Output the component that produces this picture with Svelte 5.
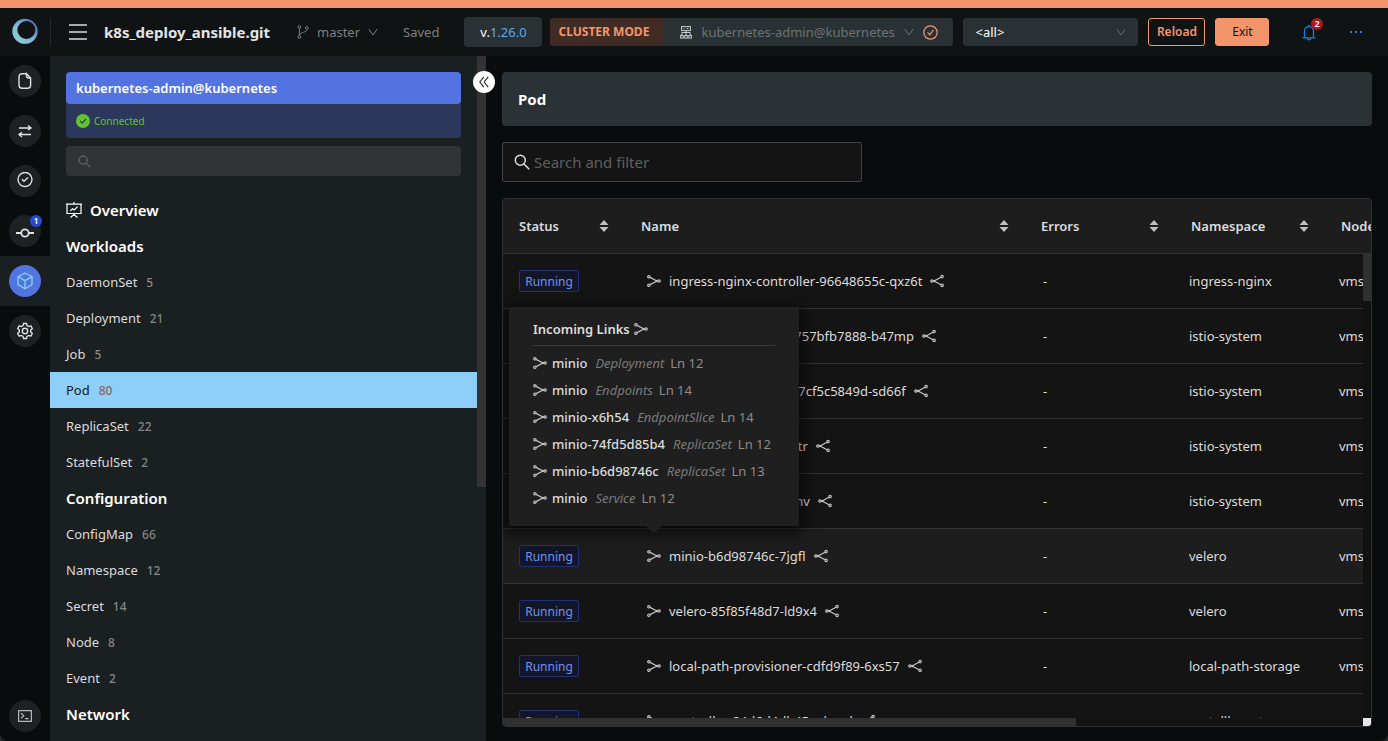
<script lang="ts">
	type Item = { name: string; count: number };
	type Section = { title: string; items: Item[] };
	type Pod = { name: string; namespace: string };

	const sections: Section[] = [
		{
			title: 'Workloads',
			items: [
				{ name: 'DaemonSet', count: 5 },
				{ name: 'Deployment', count: 21 },
				{ name: 'Job', count: 5 },
				{ name: 'Pod', count: 80 },
				{ name: 'ReplicaSet', count: 22 },
				{ name: 'StatefulSet', count: 2 }
			]
		},
		{
			title: 'Configuration',
			items: [
				{ name: 'ConfigMap', count: 66 },
				{ name: 'Namespace', count: 12 },
				{ name: 'Secret', count: 14 },
				{ name: 'Node', count: 8 },
				{ name: 'Event', count: 2 }
			]
		},
		{ title: 'Network', items: [] }
	];

	const pods: Pod[] = [
		{ name: 'ingress-nginx-controller-96648655c-qxz6t', namespace: 'ingress-nginx' },
		{ name: 'istio-egressgateway-757bfb7888-b47mp', namespace: 'istio-system' },
		{ name: 'istio-ingressgateway-7cf5c5849d-sd66f', namespace: 'istio-system' },
		{ name: 'istiod-689fbf9795-vpltr', namespace: 'istio-system' },
		{ name: 'kiali-5ff49b9f69-4mdnv', namespace: 'istio-system' },
		{ name: 'minio-b6d98746c-7jgfl', namespace: 'velero' },
		{ name: 'velero-85f85f48d7-ld9x4', namespace: 'velero' },
		{ name: 'local-path-provisioner-cdfd9f89-6xs57', namespace: 'local-path-storage' },
		{ name: 'controller-84d6d4db45-wlpwd', namespace: 'metallb-system' }
	];

	const links = [
		{ name: 'minio', kind: 'Deployment', line: 12 },
		{ name: 'minio', kind: 'Endpoints', line: 14 },
		{ name: 'minio-x6h54', kind: 'EndpointSlice', line: 14 },
		{ name: 'minio-74fd5d85b4', kind: 'ReplicaSet', line: 12 },
		{ name: 'minio-b6d98746c', kind: 'ReplicaSet', line: 13 },
		{ name: 'minio', kind: 'Service', line: 12 }
	];

	const columns = ['Status', 'Name', 'Errors', 'Namespace', 'Node'];
	const railIcons = ['file', 'swap', 'check', 'commit', 'cube', 'gear'];

	let selected = $state('Pod');
	let activeRail = $state('cube');
	let hovered = $state(5);
	let filter = $state('');
</script>

{#snippet incoming()}
	<svg class="link-icon" width="14" height="14" viewBox="0 0 14 14" fill="none" stroke="currentColor" stroke-width="1.2">
		<circle cx="1.9" cy="2.8" r="1.2" /><circle cx="1.9" cy="11.2" r="1.2" /><circle cx="12.100" cy="7" r="1.2" />
		<path d="M3 3.400 9 6.500l2 .5M3 10.600 9 7.500l2-.5" stroke-width="1.300" />
	</svg>
{/snippet}

{#snippet outgoing()}
	<svg class="link-icon" width="14" height="14" viewBox="0 0 14 14" fill="none" stroke="currentColor" stroke-width="1.2">
		<circle cx="12.1" cy="2.6" r="1.2" /><circle cx="12.1" cy="11.4" r="1.2" /><circle cx="1.900" cy="7" r="1.2" />
		<path d="M11 3.200 5 6.500 3 7M11 10.800 5 7.500 3 7" stroke-width="1.300" />
	</svg>
{/snippet}

{#snippet chevron()}
	<svg width="10" height="10" viewBox="0 0 10 10" fill="none" stroke="currentColor"><path d="m.8 2 4.200 6 4.200-6" /></svg>
{/snippet}

{#snippet magnifier(size: number)}
	<svg width={size} height={size} viewBox="0 0 16 16" fill="none" stroke="currentColor" stroke-width="1.5">
		<circle cx="6.3" cy="6.3" r="5" /><path d="m10 10 5.2 5.2" />
	</svg>
{/snippet}

<div class="app">
	<header>
		<div class="logo">
			<svg width="26" height="26" viewBox="0 0 26 26">
				<defs>
					<linearGradient id="ring" x1="0" y1="1" x2="1" y2="0">
						<stop offset="0" stop-color="#8fd6cf" /><stop offset=".5" stop-color="#80b2d8" /><stop offset="1" stop-color="#4260b5" />
					</linearGradient>
				</defs>
				<path fill="url(#ring)" fill-rule="evenodd" d="M13 .8a12.700 12.500 0 1 0 0 25A12.700 12.500 0 0 0 13 .8Zm1.400 2.200a9 9 0 1 1 0 18 9 9 0 0 1 0-18Z" />
			</svg>
		</div>
		<button class="plain menu" aria-label="Menu">
			<svg width="18" height="17" viewBox="0 0 18 17" stroke="currentColor" stroke-width="1.6"><path d="M0 1h18M0 8h18M0 15h18" /></svg>
		</button>
		<strong class="project">k8s_deploy_ansible.git</strong>
		<button class="plain branch">
			<svg width="12" height="14" viewBox="0 0 12 14" fill="none" stroke="currentColor">
				<circle cx="2.4" cy="2" r="1.4" /><circle cx="2.4" cy="12" r="1.4" /><circle cx="9.8" cy="3" r="1.4" />
				<path d="M2.4 3.4v7.2M9.8 4.4c0 3.2-6 2.6-7.2 5.4" />
			</svg>
			<span>master</span>
			{@render chevron()}
		</button>
		<span class="saved">Saved</span>
		<button class="version">v.<span>1.26.0</span></button>
		<div class="cluster">
			<span class="mode">CLUSTER MODE</span>
			<button class="plain context">
				<svg width="12" height="13" viewBox="0 0 12 13" fill="none" stroke="#c8cbcc">
					<rect x="1.500" y=".6" width="9" height="4" /><path d="M3.500 2.600h1m2 0h2M1.800 9V6.500h8.400V9M6 4.600V9" />
					<rect x=".6" y="9.5" width="2.6" height="2.6" /><rect x="4.7" y="9.5" width="2.6" height="2.6" /><rect x="8.8" y="9.5" width="2.6" height="2.6" />
				</svg>
				<span>kubernetes-admin@kubernetes</span>
				{@render chevron()}
			</button>
			<svg class="ok" width="15" height="15" viewBox="0 0 15 15" fill="none" stroke="#f2976c" stroke-width="1.2">
				<circle cx="7.5" cy="7.5" r="6.7" /><path d="m4.6 7.4 2.2 2.4 3.6-4.6" />
			</svg>
		</div>
		<div class="select">
			<select aria-label="Namespace"><option>&lt;all&gt;</option></select>
			{@render chevron()}
		</div>
		<button class="reload">Reload</button>
		<button class="exit">Exit</button>
		<div class="tools">
			<button class="plain bell" aria-label="Notifications">
				<svg width="14" height="17" viewBox="0 0 14 17" fill="none" stroke="currentColor" stroke-width="1.3">
					<path d="M.5 13.800h13M2.500 13.800V7a4.500 4.500 0 0 1 9 0v6.800M7 2.500V.8M5.300 14.500c.3 1.800 3.100 1.800 3.400 0" />
				</svg>
				<span class="badge">2</span>
			</button>
			<button class="plain dots" aria-label="More">
				<svg width="14" height="4" viewBox="0 0 14 4" fill="currentColor"><path d="M1 1h2v2H1zM6 1h2v2H6zM11 1h2v2h-2z" /></svg>
			</button>
		</div>
	</header>

	<div class="body">
		<nav class="rail" aria-label="Views">
			{#each railIcons as icon}
				<button class="rail-item" class:active={activeRail === icon} aria-label={icon} onclick={() => (activeRail = icon)}>
					<span class="circle">
						<svg width="18" height="18" viewBox="0 0 18 18" fill="none" stroke="currentColor" stroke-width="1.4">
							{#if icon === 'file'}
								<path d="M10.500 1.700H6a3 3 0 0 0-3 3v8.600a3 3 0 0 0 3 3h5.600a3 3 0 0 0 3-3V6l-4.100-4.300v2.600q0 1.700 1.700 1.700h2.400" />
							{:else if icon === 'swap'}
								<path d="M3 6h12M12 3.500 15 6l-3 2M15 12.500H3M6 10.300l-3 2.200L6 15" />
							{:else if icon === 'check'}
								<circle cx="9" cy="7.5" r="7" /><path d="m6 7.300 2 2 4-3.800" />
							{:else if icon === 'commit'}
								<circle cx="9" cy="11" r="3.7" stroke-width="1.8" /><path d="M0 11h5M13 11h5" stroke-width="1.8" />
							{:else if icon === 'cube'}
								<path d="M9 1 16 4.700v8L9 16.800l-7-4.100v-8zM2 4.700l7 3.900 7-3.900M9 8.600v8.200" />
							{:else}
								<path d="M7.500 1.500h3l.5 2.100 1.700 1 2.100-.7 1.500 2.600-1.600 1.500v2l1.600 1.500-1.500 2.600-2.100-.7-1.700 1-.5 2.100h-3L7 14.400l-1.700-1-2.100.7-1.500-2.600L3.300 10V8L1.700 6.500l1.500-2.600 2.100.7 1.700-1z" /><circle cx="9" cy="9" r="2.7" />
							{/if}
						</svg>
						{#if icon === 'commit'}<span class="badge">1</span>{/if}
					</span>
				</button>
			{/each}
			<button class="rail-item terminal" aria-label="Terminal">
				<span class="circle">
					<svg width="14" height="12" viewBox="0 0 14 12" fill="none" stroke="currentColor" stroke-width="1.2">
						<path d="M.6.6h12.800v10.800H.6zM3 3.300l2.800 2.500L3 8.300M7 8.600h3.600" />
					</svg>
				</span>
			</button>
		</nav>

		<aside>
			<div class="side-content">
				<div class="connection">
					<strong>kubernetes-admin@kubernetes</strong>
					<p>
						<svg width="14" height="14" viewBox="0 0 14 14"><circle cx="7" cy="7" r="7" fill="#62c22f" /><path d="m4.200 6.800 2 2.300L10 4.800" fill="none" stroke="#2b3a5c" stroke-width="1.2" /></svg>
						Connected
					</p>
				</div>
				<label class="side-search">
					{@render magnifier(13)}
					<input type="text" aria-label="Search resources" />
				</label>
				<h2 class="overview">
					<svg width="16" height="16" viewBox="0 0 16 16" fill="none" stroke="currentColor" stroke-width="1.2">
						<path d="M0 2.100h16M1 2.100v9.400h14V2.100M8 0v2M8 11.500V14M4.500 15.500 8 12.500l3.500 3M4.300 8.700l2.400-2 1.600 1.200 3.400-3.300" />
					</svg>
					Overview
				</h2>
				{#each sections as section}
					<h2>{section.title}</h2>
					{#each section.items as item}
						<button class="kind" class:selected={selected === item.name} onclick={() => (selected = item.name)}>
							{item.name}<span>{item.count}</span>
						</button>
					{/each}
				{/each}
			</div>
			<div class="side-scroll"></div>
			<button class="collapse" aria-label="Collapse">
				<svg width="12" height="12" viewBox="0 0 12 12" fill="none" stroke="#222" stroke-width="1.1"><path d="M5.800.8 1.800 6l4 5.200M10.200.8 6.200 6l4 5.200" /></svg>
			</button>
		</aside>

		<main>
			<h1>{selected}</h1>
			<label class="filter">
				{@render magnifier(16)}
				<input type="text" placeholder="Search and filter" bind:value={filter} />
			</label>
			<div class="table-box">
				<table>
					<thead>
						<tr>
							{#each columns as column}
								<th class={column.toLowerCase()}>
									<div>
										{column}
										{#if column !== 'Node'}
											<svg width="10" height="12" viewBox="0 0 10 12" fill="#bfbfbf"><path d="M5 0l4.500 5h-9zM5 12 .5 7h9z" /></svg>
										{/if}
									</div>
								</th>
							{/each}
						</tr>
					</thead>
					<tbody>
						{#each pods as pod, i}
							<tr class:hovered={hovered === i} onmouseenter={() => (hovered = i)}>
								<td><span class="tag">Running</span></td>
								<td class="name">
									<div>
										<span class="anchor">
											{@render incoming()}
											{#if hovered === i}
												<div class="popover">
													<h3>Incoming Links {@render incoming()}</h3>
													<ul>
														{#each links as link}
															<li>{@render incoming()}<b>{link.name}</b><i>{link.kind}</i><span>Ln {link.line}</span></li>
														{/each}
													</ul>
												</div>
											{/if}
										</span>
										<span class="pod-name">{pod.name}</span>
										{@render outgoing()}
									</div>
								</td>
								<td class="error-count">-</td>
								<td class="shift">{pod.namespace}</td>
								<td class="shift">vms-k8s</td>
							</tr>
						{/each}
					</tbody>
				</table>
				<div class="v-scroll"><div></div></div>
				<div class="h-scroll"><div></div><span></span></div>
			</div>
		</main>
	</div>
</div>

<style>
	:global(body) {
		background: #24282a;
	}

	.app {
		display: flex;
		flex-direction: column;
		height: 100vh;
		overflow: hidden;
		box-sizing: border-box;
		border-top: 8px solid #f2956a;
		border-radius: 0 0 8px 8px;
		background: #090c0d;
		color: #dcdcdc;
		font: 13px/20px 'Segoe UI', 'Noto Sans', sans-serif;
	}

	.app :global(*) {
		box-sizing: border-box;
	}

	svg {
		flex: none;
		display: block;
	}

	button, input, select {
		font: inherit;
		color: inherit;
	}

	button {
		cursor: pointer;
		padding: 0;
		border: none;
	}

	.plain {
		display: flex;
		align-items: center;
		background: none;
	}

	h1, h2, h3, p, ul {
		margin: 0;
		padding: 0;
	}

	/* header */
	header {
		display: flex;
		align-items: center;
		flex: none;
		height: 48px;
		background: #0f1314;
		white-space: nowrap;
	}

	.logo {
		width: 51px;
		height: 28px;
		padding-left: 12px;
		border-right: 1px solid #25292a;
	}

	.menu {
		margin-left: 18px;
	}

	.project {
		width: 168px;
		margin-left: 17px;
		font-size: 15px;
		font-weight: 700;
		color: #e4e4e4;
	}

	.branch {
		gap: 8px;
		margin-left: 25px;
		color: #7d7f80;
	}

	.saved {
		margin-left: 25px;
		color: #7d7f80;
	}

	.version {
		width: 78px;
		height: 30px;
		margin-left: 25px;
		border-radius: 4px;
		background: #2a3134;
		color: #fff;
	}

	.version span {
		color: #55aef0;
	}

	.cluster {
		display: flex;
		align-items: center;
		width: 403px;
		height: 28px;
		margin-left: 8px;
		border-radius: 4px;
		overflow: hidden;
		background: #2a3134;
	}

	.mode {
		width: 113px;
		padding-left: 8px;
		line-height: 28px;
		background: #402c25;
		color: #f5956a;
		font-size: 12px;
		font-weight: 700;
	}

	.context {
		gap: 9px;
		margin-left: 17px;
		color: #6c7173;
	}

	.ok {
		margin-left: 9px;
	}

	.select {
		position: relative;
		width: 175px;
		margin-left: 10px;
		color: #65696b;
	}

	.select select {
		appearance: none;
		width: 100%;
		height: 28px;
		padding: 0 12px;
		border: none;
		border-radius: 4px;
		background: #2a3134;
		color: #fff;
	}

	.select svg {
		position: absolute;
		right: 12px;
		top: 9px;
	}

	.reload, .exit {
		height: 28px;
		margin-left: 10px;
		border: 1px solid #f2956a;
		border-radius: 3px;
		font-size: 12px;
	}

	.reload {
		width: 57px;
		background: none;
		color: #f5956a;
		font-weight: 600;
	}

	.exit {
		width: 54px;
		background: #f2956a;
		color: #141414;
	}

	.tools {
		display: flex;
		align-items: center;
		gap: 33px;
		margin-left: auto;
		padding-right: 25px;
		color: #177ddc;
	}

	.bell {
		position: relative;
	}

	.badge {
		position: absolute;
		top: -6px;
		right: -7px;
		width: 12px;
		height: 12px;
		border-radius: 50%;
		background: #a8181f;
		color: #fff;
		font-size: 9px;
		font-weight: 600;
		line-height: 12px;
		text-align: center;
	}

	/* left rail */
	.body {
		display: flex;
		flex: 1;
		min-height: 0;
	}

	.rail {
		display: flex;
		flex-direction: column;
		flex: none;
		width: 50px;
	}

	.rail-item {
		display: grid;
		place-items: center;
		height: 50px;
		background: none;
		color: #dfe1e2;
	}

	.circle {
		position: relative;
		display: grid;
		place-items: center;
		width: 32px;
		height: 32px;
		border-radius: 50%;
		background: #1d2123;
	}

	.circle .badge {
		top: 0;
		right: -1px;
		background: #2b4acb;
	}

	.rail-item.active {
		background: #1a1f21;
	}

	.active .circle {
		background: #5273e0;
		color: #7fd3ee;
	}

	.terminal {
		margin-top: auto;
		color: #b4b6b7;
	}

	/* sidebar */
	aside {
		position: relative;
		display: flex;
		flex: none;
		width: 436px;
		background: #1a1f21;
	}

	.side-content {
		flex: 1;
		padding-top: 16px;
		overflow: hidden;
	}

	.side-scroll {
		width: 9px;
		height: 431px;
		background: #333;
	}

	.collapse {
		position: absolute;
		top: 15px;
		right: -9px;
		z-index: 2;
		display: grid;
		place-items: center;
		width: 22px;
		height: 22px;
		border-radius: 50%;
		background: #fff;
	}

	.connection {
		margin: 0 16px 8px;
		border-radius: 4px;
		overflow: hidden;
		background: #2b385b;
	}

	.connection strong {
		display: block;
		padding: 0 10px;
		border-radius: 4px;
		background: #5273e0;
		color: #fff;
		font-weight: 600;
		line-height: 32px;
	}

	.connection p {
		display: flex;
		align-items: center;
		gap: 4px;
		height: 34px;
		padding: 0 10px;
		color: #62c22f;
		font-size: 10px;
	}

	.side-search {
		display: flex;
		align-items: center;
		gap: 8px;
		height: 30px;
		margin: 0 16px 16px;
		padding: 0 12px;
		border-radius: 4px;
		background: #303435;
		color: #606465;
	}

	.side-search input, .filter input {
		flex: 1;
		min-width: 0;
		padding: 0;
		border: none;
		outline: none;
		background: none;
	}

	h2 {
		padding: 0 16px;
		color: #fff;
		font-size: 15px;
		font-weight: 600;
		line-height: 36px;
	}

	.overview {
		display: flex;
		align-items: center;
		gap: 8px;
	}

	.kind {
		display: block;
		width: 100%;
		height: 36px;
		padding: 0 16px;
		background: none;
		color: #dbdcdd;
		text-align: left;
	}

	.kind span {
		margin-left: 9px;
		color: #838687;
		font-size: 12px;
		font-weight: 500;
	}

	.kind.selected {
		background: #8dcff8;
		color: #14191b;
	}

	.kind.selected span {
		color: #8a6a5a;
	}

	/* content */
	main {
		display: flex;
		flex-direction: column;
		flex: 1;
		min-width: 0;
		padding: 16px 16px 14px;
	}

	h1 {
		padding: 0 16px;
		border-radius: 4px;
		background: #2a3235;
		color: #fff;
		font-size: 15px;
		font-weight: 700;
		line-height: 54px;
	}

	.filter {
		display: flex;
		align-items: center;
		flex: none;
		gap: 4px;
		width: 360px;
		height: 40px;
		margin: 16px 0;
		padding: 0 11px;
		border: 1px solid #434343;
		border-radius: 2px;
		background: #141414;
		font-size: 15px;
	}

	.filter input::placeholder {
		color: #5f5f5f;
		opacity: 1;
	}

	.table-box {
		position: relative;
		flex: 1;
		min-height: 0;
		overflow: hidden;
		border: 1px solid #303030;
		border-radius: 4px;
		background: #141414;
	}

	table {
		width: 1122px;
		table-layout: fixed;
		border-collapse: separate;
		border-spacing: 0;
	}

	th, td {
		height: 55px;
		padding: 0 16px;
		border-bottom: 1px solid #303030;
		text-align: left;
		white-space: nowrap;
	}

	th {
		background: #1d1d1d;
		font-weight: 600;
	}

	th div {
		display: flex;
		align-items: center;
		justify-content: space-between;
	}

	.status {
		width: 122px;
	}

	th.name {
		width: 400px;
	}

	.errors, .namespace {
		width: 150px;
	}

	.hovered td {
		background: #1d1d1d;
	}

	.tag {
		display: block;
		width: 60px;
		height: 22px;
		border: 1px solid #203175;
		border-radius: 2px;
		background: #131629;
		color: #6d94f0;
		font-size: 12px;
		line-height: 22px;
		text-align: center;
	}

	td.name {
		padding-left: 22px;
	}

	td.name > div {
		display: flex;
		align-items: center;
		gap: 8px;
	}

	.link-icon {
		color: #c4c4c4;
	}

	td.error-count {
		padding-left: 18px;
	}

	td.shift {
		padding-left: 14px;
	}

	.anchor {
		position: relative;
	}

	.popover {
		position: absolute;
		left: 50%;
		bottom: 37px;
		z-index: 1;
		width: 290px;
		padding: 12px 24px 15px;
		border-radius: 2px;
		background: #1f1f1f;
		box-shadow: 0 4px 16px 4px #0009;
		transform: translateX(-50%);
	}

	.popover::after {
		content: '';
		position: absolute;
		top: 100%;
		left: 50%;
		margin-left: -8px;
		border: 8px solid transparent;
		border-top: 7px solid #1f1f1f;
		border-bottom: none;
	}

	h3 {
		display: flex;
		align-items: center;
		gap: 4px;
		margin-bottom: 3px;
		padding-bottom: 6px;
		border-bottom: 1px solid #3a3a3a;
		font-size: 13px;
		font-weight: 600;
		line-height: 20px;
	}

	li {
		display: flex;
		align-items: center;
		height: 27px;
		color: #8c8c8c;
	}

	li b {
		margin: 0 8px 0 5px;
		color: #dcdcdc;
		font-weight: 500;
	}

	li i {
		margin-right: 6px;
		color: #7a7a7a;
	}

	.v-scroll {
		position: absolute;
		top: 55px;
		right: 0;
		bottom: 0;
		width: 8px;
		background: #111;
	}

	.v-scroll div {
		height: 47px;
		background: #303030;
	}

	.h-scroll {
		position: absolute;
		left: 0;
		right: 0;
		bottom: 0;
		display: flex;
		justify-content: space-between;
		height: 8px;
		background: #141414;
	}

	.h-scroll div {
		width: 66%;
		background: #303030;
	}

	.h-scroll span {
		width: 8px;
		background: #e8e8e8;
	}
</style>
